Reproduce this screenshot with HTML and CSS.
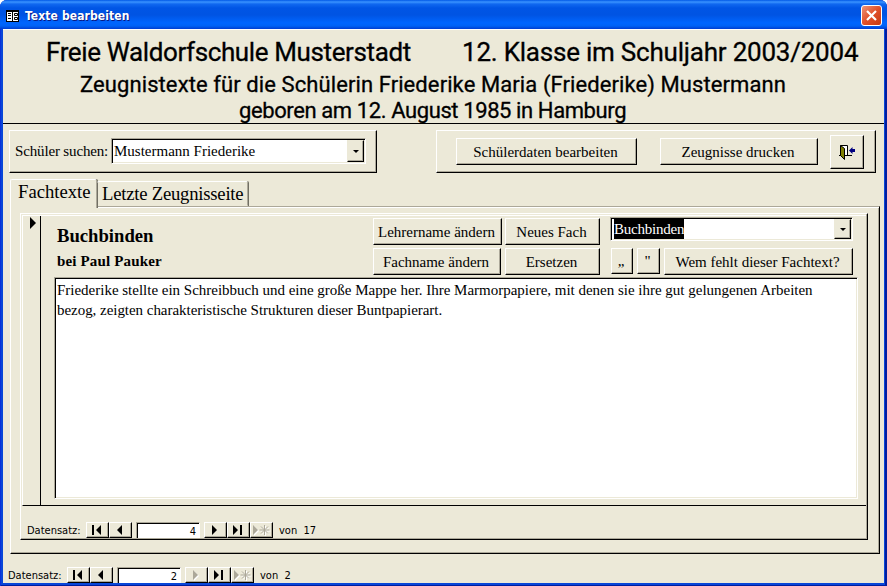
FILE: index.html
```html
<!DOCTYPE html>
<html lang="de">
<head>
<meta charset="utf-8">
<title>Texte bearbeiten</title>
<link rel="stylesheet" href="styles.css">
</head>
<body>
<svg width="0" height="0" class="defs" aria-hidden="true">
  <symbol id="left" viewBox="0 0 20 14"><path d="M12 2v10L7 7z"/></symbol>
  <symbol id="right" viewBox="0 0 20 14"><path d="M7 2v10l5-5z"/></symbol>
  <symbol id="first" viewBox="0 0 20 14"><path d="M5 2h2v10H5zM14 2v10L9 7z"/></symbol>
  <symbol id="last" viewBox="0 0 20 14"><path d="M5 2v10l5-5zM12 2h2v10h-2z"/></symbol>
  <symbol id="new" viewBox="0 0 20 14"><path d="M2 2v10l5-5z"/><path d="M13.500 2v10M8.500 7h10M10 3.500l7 7M17 3.500l-7 7" fill="none" stroke="currentColor"/></symbol>
</svg>
<div class="window">
  <header class="titlebar">
    <svg class="appicon" width="13" height="12" viewBox="0 0 13 12"><path d="M0 0h13v12H0z" fill="#000"/><path d="M1 2h11v9H1z" fill="#fff"/><path d="M2 3.500h3M2 5.500h3M2 8.500h3M6.500 2v9M8.500 3.500h3v2h-3zM8.500 7.500h3v2h-3z" fill="none" stroke="#000"/></svg>
    <h1>Texte bearbeiten</h1>
    <button class="close"><svg width="19" height="19" viewBox="0 0 19 19"><path d="M5 5l9 9M14 5l-9 9" stroke="#fff" stroke-width="2.200"/></svg></button>
  </header>
  <main>
    <section class="banner">
      <p class="b1"><span class="school">Freie Waldorfschule Musterstadt</span><span class="year">12. Klasse im Schuljahr 2003/2004</span></p>
      <p class="b2"><span>Zeugnistexte für die Schülerin Friederike Maria (Friederike) Mustermann</span></p>
      <p class="b3"><span>geboren am 12. August 1985 in Hamburg</span></p>
    </section>
    <section class="tools">
      <div class="panel search"><label>Schüler suchen:</label><div class="combo"><span class="t-name">Mustermann Friederike</span><i class="drop"></i></div></div>
      <div class="panel actions">
        <button class="btn edit"><span>Schülerdaten bearbeiten</span></button>
        <button class="btn print"><span>Zeugnisse drucken</span></button>
        <button class="btn exit"><svg width="16" height="16" viewBox="0 0 16 16"><path d="M0 11.500h2M1.500 1.500h7v10M5 11.500h8" fill="none" stroke="#000"/><path d="M3 2h5v9H5z" fill="#fff"/><path d="M1.500 1.500l4 3v11l-4-4z" fill="#808000" stroke="#000"/><path d="M10 6.500l3.500-3.500v2H16v3h-2.500v2z" fill="#000080"/></svg></button>
      </div>
    </section>
    <nav class="tabs"><div class="tab on"><span>Fachtexte</span></div><div class="tab off"><span>Letzte Zeugnisseite</span></div></nav>
    <section class="page">
      <div class="subform">
        <div class="record">
          <div class="selector"><svg width="6" height="12" viewBox="0 0 6 12"><path d="M0 0v12l6-6z"/></svg></div>
          <div class="detail">
            <div class="top">
              <div class="names"><h2><span>Buchbinden</span></h2><h3><span>bei Paul Pauker</span></h3></div>
              <div class="mid">
                <button class="btn m1"><span>Lehrername ändern</span></button><button class="btn m2"><span>Neues Fach</span></button>
                <button class="btn m3"><span>Fachname ändern</span></button><button class="btn m4"><span>Ersetzen</span></button>
              </div>
              <div class="right">
                <div class="combo"><span class="sel">Buchbinden</span><i class="drop"></i></div>
                <div class="quotes"><button class="btn q1"><span>„</span></button><button class="btn q2"><span>"</span></button><button class="btn wem"><span>Wem fehlt dieser Fachtext?</span></button></div>
              </div>
            </div>
            <div class="text"><p class="l1">Friederike stellte ein Schreibbuch und eine große Mappe her. Ihre Marmorpapiere, mit denen sie ihre gut gelungenen Arbeiten</p><p class="l2">bezog, zeigten charakteristische Strukturen dieser Buntpapierart.</p></div>
          </div>
        </div>
        <div class="recnav">
          <span class="lbl">Datensatz:</span>
          <button class="nb"><svg><use href="#first"/></svg></button><button class="nb"><svg><use href="#left"/></svg></button>
          <div class="num">4</div>
          <button class="nb"><svg><use href="#right"/></svg></button><button class="nb"><svg><use href="#last"/></svg></button><button class="nb dis"><svg><use href="#new"/></svg></button>
          <span class="of">von&nbsp; 17</span>
        </div>
      </div>
    </section>
    <div class="recnav outer">
      <span class="lbl">Datensatz:</span>
      <button class="nb"><svg><use href="#first"/></svg></button><button class="nb"><svg><use href="#left"/></svg></button>
      <div class="num">2</div>
      <button class="nb dis"><svg><use href="#right"/></svg></button><button class="nb"><svg><use href="#last"/></svg></button><button class="nb dis"><svg><use href="#new"/></svg></button>
      <span class="of">von&nbsp; 2</span>
    </div>
  </main>
</div>
</body>
</html>
```
FILE: styles.css
```css
* { box-sizing: border-box; margin: 0; padding: 0; }
body { width: 887px; height: 586px; overflow: hidden; background: #fff; font: 15px "Liberation Serif", serif; color: #000; }
.defs { display: block; height: 0; }
button { font: inherit; color: inherit; background: none; border: 0; }
span { white-space: pre; }
.window { width: 887px; height: 586px; border-radius: 7px 7px 0 0; overflow: hidden; background: #0846d8; display: flex; flex-direction: column; padding: 0 3px 3px; box-shadow: inset 1px 0 #0831d9, inset -2px -1px #001ea0; }
.titlebar { height: 29px; flex: none; margin: 0 -3px; padding: 2px 5px 0 6px; display: flex; align-items: center; background: linear-gradient(#0058e6 0, #3a93ff 2px, #1068f0 4px, #0055e5 8px, #0054e3 15px, #0066ff 23px, #0062f5 26px, #003dd0 29px); }
.titlebar h1 { flex: 1; margin-left: 6px; font: bold 12px "DejaVu Sans Condensed", "DejaVu Sans", sans-serif; letter-spacing: .1px; color: #fff; text-shadow: 1px 1px #0a1883; }
.close { width: 21px; height: 21px; border: 1px solid #fff; border-radius: 3px; background: linear-gradient(135deg, #ee9478, #e0502a 50%, #c63a12); display: grid; place-items: center; }
main { flex: 1; background: #ece9d8; border-top: 1px solid #fff; display: flex; flex-direction: column; }
.banner { height: 94px; border-bottom: 1px solid #000; font-family: Roboto, sans-serif; -webkit-text-stroke: .3px #000; }
.banner p { white-space: nowrap; }
.b1 { display: flex; padding: 6px 0 0 43px; font-size: 26px; line-height: 32px; }
.school { width: 416px; letter-spacing: -.38px; }
.year { letter-spacing: -.22px; }
.b2 { padding: 1px 0 0 77px; font-size: 22px; line-height: 31px; letter-spacing: .09px; }
.b3 { padding-left: 236px; font-size: 22px; line-height: 22px; letter-spacing: -.4px; }
.tools { display: flex; gap: 59px; padding: 6px 8px 0 6px; }
.panel, .btn { border: 1px solid; border-color: #fff #000 #000 #fff; box-shadow: inset -1px -1px #aca899; }
.panel { height: 43px; display: flex; }
.search { width: 368px; padding: 7px 0 0 5px; }
.search label { width: 96px; line-height: 26px; white-space: nowrap; letter-spacing: -.15px; }
.actions { width: 440px; padding-top: 7px; }
.btn { display: flex; align-items: center; justify-content: center; padding: 1px 2px 0 0; }
.edit { width: 181px; height: 27px; margin-left: 19px; }
.print { width: 158px; height: 27px; margin-left: 23px; }
.exit { width: 34px; height: 34px; margin: -3px 0 0 12px; padding: 0; }
.combo { display: flex; background: #fff; border: 1px solid; border-color: #aca899 #fff #fff #aca899; box-shadow: inset 1px 1px #000, inset -1px -1px #ece9d8; padding: 1px 1px 1px 2px; }
.combo span { flex: none; }
.search .combo { width: 255px; height: 26px; line-height: 22px; }
.drop { margin-left: auto; width: 17px; border: 1px solid; border-color: #ece9d8 #000 #000 #ece9d8; box-shadow: inset -1px -1px #aca899; background: #ece9d8; display: grid; place-items: center; }
.drop::after { content: ""; border: 3px solid transparent; border-top-color: #000; border-bottom: 0; }
.tabs { display: flex; height: 34px; padding: 6px 0 0 7px; font-size: 18.67px; position: relative; margin-bottom: -1px; }
.tab { border: 1px solid; border-color: #fff #aca899 transparent #fff; box-shadow: 1px 0 #716f64; border-radius: 2px 2px 0 0; white-space: nowrap; }
.on { width: 87px; height: 29px; background: #ece9d8; padding-left: 7px; line-height: 23px; border-bottom: 0; }
.off { width: 151px; margin-top: 2px; height: 25px; padding-left: 5px; line-height: 24px; border-left: 0; letter-spacing: -.22px; }
.page { margin: 0 4px 0 7px; height: 348px; border: 1px solid; border-color: #aca899 #000 #000 #fff; box-shadow: inset 0 1px #fff, inset -1px -1px #aca899; padding: 6px 0 0 9px; }
.subform { width: 848px; height: 327px; border: 1px solid; border-color: #fff #000 #000 #fff; box-shadow: inset -1px -1px #aca899; padding: 1px 1px 0; }
.record { height: 291px; display: flex; border-bottom: 1px solid #000; border-top: 1px solid #fff; border-left: 1px solid #fff; }
.selector { width: 18px; border-right: 1px solid #000; padding: 1px 0 0 7px; }
.selector svg { display: block; }
.detail { padding-left: 13px; }
.top { height: 61px; display: flex; padding-top: 2px; }
.names { width: 319px; padding-left: 3px; }
h2 { font-size: 18.67px; line-height: 22px; padding-top: 7px; }
h3 { font-size: 15px; line-height: 20px; padding-top: 4px; letter-spacing: .15px; }
.mid { width: 237px; display: grid; grid-template-columns: 132px 95px; grid-auto-rows: 27px; row-gap: 3px; align-content: start; }
.m1 { width: 129px; } .m3 { width: 128px; }
.right { margin-top: -1px; }
.right .combo { width: 243px; height: 24px; line-height: 21px; }
.right .combo span { background: #000; color: #fff; margin-left: 1px; letter-spacing: -.22px; }
.quotes { display: flex; margin-top: 7px; padding-left: 1px; gap: 4px; }
.q1 { width: 22px; height: 26px; } .q2 { width: 23px; height: 26px; }
.wem { width: 189px; height: 27px; }
.text { width: 804px; height: 222px; background: #fff; border: 1px solid; border-color: #aca899 #fff #fff #aca899; box-shadow: inset 1px 1px #000, inset -1px -1px #ece9d8; padding: 2px 2px; font-size: 15px; line-height: 20px; letter-spacing: -.01px; white-space: nowrap; }
.l2 { letter-spacing: -.04px; }
.recnav { display: flex; height: 16px; margin: 16px 0 0 5px; font: 11px "DejaVu Sans Condensed", "DejaVu Sans", sans-serif; line-height: 17px; }
.lbl { width: 59px; }
.nb { width: 23px; height: 16px; border: 1px solid; border-color: #fff #000 #000 #fff; box-shadow: inset -1px -1px #aca899; }
.nb svg { display: block; width: 20px; height: 14px; fill: currentColor; }
.dis { color: #aca899; }
.dis svg { filter: drop-shadow(1px 1px 0 #fff); }
.num { width: 64px; height: 16px; margin: 0 4px; background: #fff; border: 1px solid; border-color: #aca899 #fff #fff #aca899; border-bottom: 0; box-shadow: inset 1px 1px #000; text-align: right; padding-right: 3px; }
.of { margin-left: 6px; }
.outer { margin: 13px 0 0 5px; overflow: hidden; line-height: 18px; }
```
